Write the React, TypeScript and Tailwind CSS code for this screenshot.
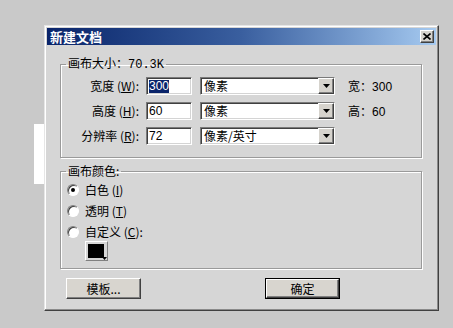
import React from 'react';

const cjk = "font-['SimSun','Noto_Sans_CJK_SC',sans-serif]";

// sunken field border (classic windows look)
const sunken =
  'border border-t-[#7a7a7a] border-l-[#7a7a7a] border-b-white border-r-white shadow-[inset_1px_1px_0_#404040,inset_-1px_-1px_0_#d4d4d4]';

const raised =
  'border border-t-white border-l-white border-b-[#404040] border-r-[#404040] shadow-[inset_-1px_-1px_0_#808080]';

function Arrow() {
  return (
    <div className={`w-[16px] h-[16px] bg-[#d6d3cd] flex items-center justify-center ${raised}`}>
      <svg width="7" height="4" viewBox="0 0 7 4">
        <path d="M0 0h7L3.5 4z" fill="#000" />
      </svg>
    </div>
  );
}

function Select({ text }: { text: string }) {
  return (
    <div className={`w-[135px] h-[18px] bg-white flex items-center justify-between ${sunken}`}>
      <span className="pl-[3px] text-[12px] leading-none">{text}</span>
      <Arrow />
    </div>
  );
}

function Row({ label, hot, value, unit, selected, note, num }: { label: string; hot: string; value: string; unit: string; selected?: boolean; note?: string; num?: string }) {
  return (
    <div className="flex items-center h-[18px]">
      <div className="w-[78px] text-right text-[12px] leading-none">
        {label} (<span className="underline">{hot}</span>):
      </div>
      <div className={`ml-[7px] w-[46px] h-[18px] bg-white flex items-center pl-[2px] ${sunken}`}>
        <span
          className={`font-['Liberation_Sans',sans-serif] text-[12px] leading-[13px] ${selected ? 'bg-[#0a246a] text-white' : ''}`}
        >
          {value}
        </span>
      </div>
      <div className="ml-[8px]">
        <Select text={unit} />
      </div>
      {note && (
        <div className="ml-[13px] text-[12px] leading-none">
          {note}：<span className="font-['Liberation_Sans',sans-serif]">{num}</span>
        </div>
      )}
    </div>
  );
}

function Radio({ checked, label, hot, colon }: { checked?: boolean; label: string; hot: string; colon?: boolean }) {
  return (
    <div className="flex items-center h-[16px]">
      <div className="w-[12px] h-[12px] rounded-full bg-white border border-t-[#808080] border-l-[#808080] border-b-white border-r-white shadow-[inset_1px_1px_0_#404040] flex items-center justify-center">
        {checked && <div className="w-[4px] h-[4px] rounded-full bg-black" />}
      </div>
      <span className="ml-[6px] text-[12px] leading-none">
        {label} (<span className="underline">{hot}</span>){colon ? ':' : ''}
      </span>
    </div>
  );
}

function Button({ children, isDefault }: { children: React.ReactNode; isDefault?: boolean }) {
  return (
    <div className={`w-[75px] h-[21px] ${isDefault ? 'border border-black' : ''}`}>
      <div className={`w-full h-full bg-[#d8d5cf] flex items-center justify-center text-[12px] leading-none ${raised}`}>
        {children}
      </div>
    </div>
  );
}

export default function App() {
  return (
    <div className={`relative w-[453px] h-[328px] bg-[#c9c9c9] pt-[25px] pl-[44px] text-black ${cjk}`}>
      {/* stray white strip at left of window */}
      <div className="absolute left-[34px] top-[124px] w-[10px] h-[60px] bg-white" />

      <div className="w-[395px] h-[286px] bg-[#d6d6d6] p-[2px] border border-t-[#e6e6e6] border-l-[#e6e6e6] border-b-[#404040] border-r-[#404040] shadow-[inset_-1px_-1px_0_#8a8a8a,inset_1px_1px_0_#ffffff]">
        {/* title bar */}
        <div className="h-[17px] bg-gradient-to-r from-[#0a246a] via-[#3a5f9f] to-[#a6caf0] flex items-center justify-between pl-[3px] pr-[2px]">
          <span className="text-white font-bold text-[13px] leading-none">新建文档</span>
          <div className={`w-[14px] h-[13px] bg-[#d6d3cd] flex items-center justify-center ${raised}`}>
            <svg width="8" height="7" viewBox="0 0 8 7">
              <path d="M0.5 0.5L7.5 6.5M7.5 0.5L0.5 6.5" stroke="#000" strokeWidth="1.6" />
            </svg>
          </div>
        </div>

        <div className="pl-[13px] pr-[14px] pt-[10px]">
          <fieldset className="border border-[#9a9a9a] shadow-[1px_1px_0_#ffffff,inset_1px_1px_0_#ffffff] pb-[12px]">
            <legend className="ml-[5px] px-[2px] text-[12px] leading-[16px]">
              画布大小：<span className="font-['Liberation_Mono',monospace]">70.3K</span>
            </legend>
            <div className="flex flex-col gap-[7px] pt-[4px]">
              <Row label="宽度" hot="W" value="300" unit="像素" selected note="宽" num="300" />
              <Row label="高度" hot="H" value="60" unit="像素" note="高" num="60" />
              <Row label="分辨率" hot="R" value="72" unit="像素/英寸" />
            </div>
          </fieldset>

          <fieldset className="mt-[5px] border border-[#9a9a9a] shadow-[1px_1px_0_#ffffff,inset_1px_1px_0_#ffffff] pl-[6px] h-[106px]">
            <legend className="ml-[-1px] px-[2px] text-[12px] leading-[16px]">画布颜色:</legend>
            <div className="flex flex-col gap-[5px] pt-[3px]">
              <Radio checked label="白色" hot="I" />
              <Radio label="透明" hot="T" />
              <Radio label="自定义" hot="C" colon />
            </div>
            <div className="ml-[18px] mt-[1px] relative w-[23px] h-[20px] bg-[#d6d6d6] border border-t-white border-l-white border-b-[#808080] border-r-[#808080] p-[2px]">
              <div className="w-[16px] h-[14px] bg-black" />
              <svg className="absolute right-[0px] bottom-[0px]" width="5" height="3" viewBox="0 0 5 3">
                <path d="M0 0h5L2.5 3z" fill="#000" />
              </svg>
            </div>
          </fieldset>

          <div className="flex mt-[9px] pl-[6px] gap-[124px]">
            <Button>模板...</Button>
            <Button isDefault>确定</Button>
          </div>
        </div>
      </div>
    </div>
  );
}
